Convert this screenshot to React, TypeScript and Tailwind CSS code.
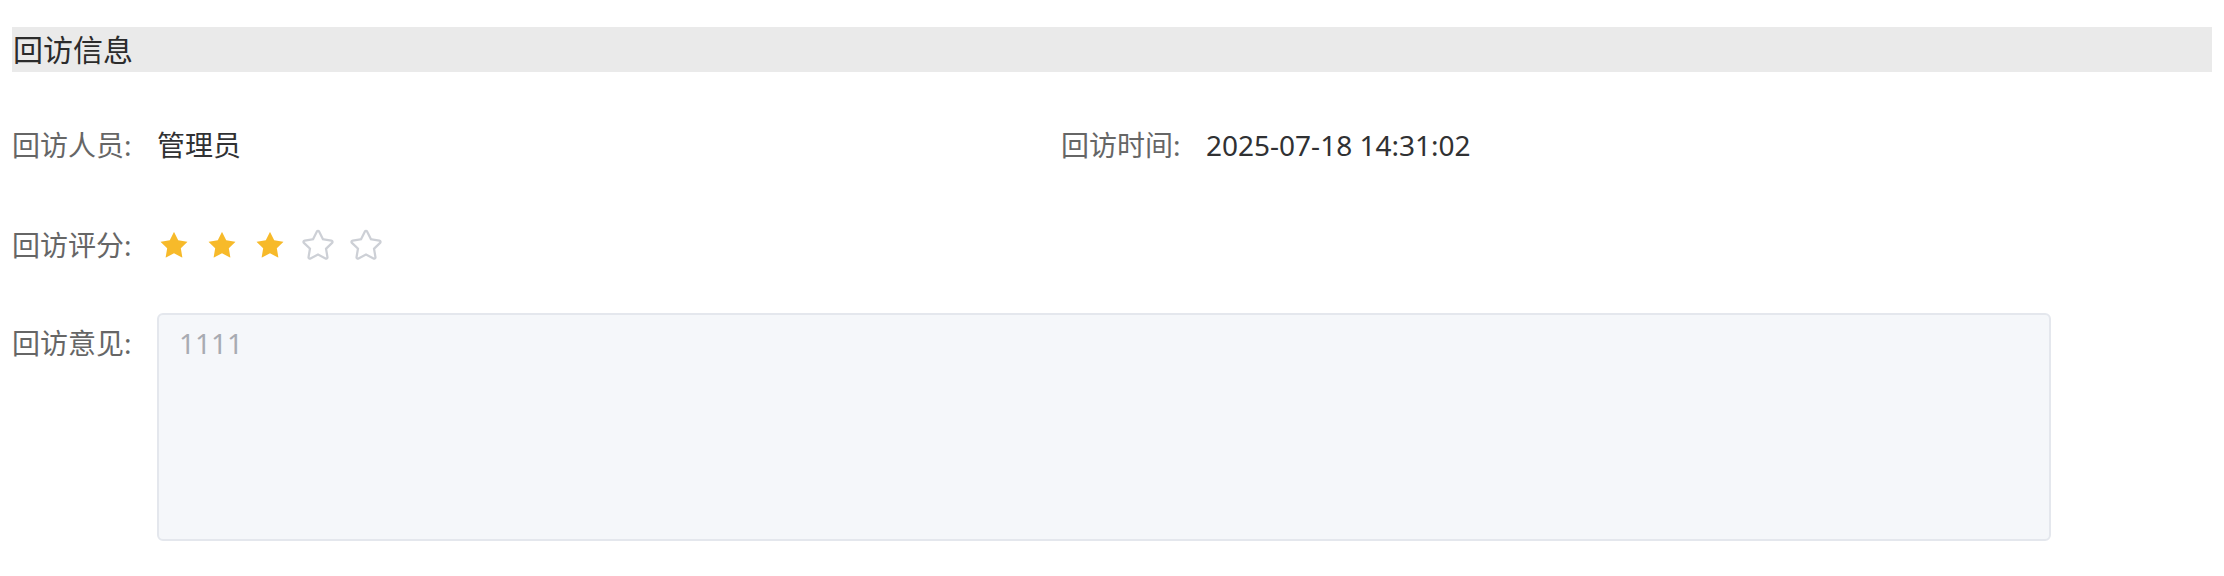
import React from "react";

const FONT = { fontFamily: '"Noto Sans", "Noto Sans CJK SC", sans-serif' };

const STAR_FILLED =
  "M283.84 867.84 512 747.776l228.16 119.936a6.4 6.4 0 0 0 9.216-6.72l-43.52-254.08 184.512-179.904a6.4 6.4 0 0 0-3.52-10.88l-255.104-37.12L517.76 147.904a6.4 6.4 0 0 0-11.52 0L392.192 379.072l-255.104 37.12a6.4 6.4 0 0 0-3.52 10.88L318.08 606.976l-43.584 254.08a6.4 6.4 0 0 0 9.28 6.72z";
const STAR_OUTLINE =
  "M512 747.84l228.16 119.936a6.4 6.4 0 0 0 9.28-6.72l-43.52-254.08 184.512-179.904a6.4 6.4 0 0 0-3.52-10.88l-255.104-37.12L517.76 147.904a6.4 6.4 0 0 0-11.52 0L392.192 379.072l-255.104 37.12a6.4 6.4 0 0 0-3.52 10.88L318.08 606.976l-43.584 254.08a6.4 6.4 0 0 0 9.28 6.72L512 747.84zM313.6 924.48a70.4 70.4 0 0 1-102.144-74.24l37.888-220.928L88.96 472.96A70.4 70.4 0 0 1 128 352.896l221.76-32.256 99.2-200.96a70.4 70.4 0 0 1 126.208 0l99.2 200.96 221.824 32.256a70.4 70.4 0 0 1 39.04 120.064L774.72 629.376l37.888 220.928a70.4 70.4 0 0 1-102.144 74.24L512 820.096l-198.4 104.32z";

function Star({ on }: { on: boolean }) {
  return (
    <svg viewBox="0 0 1024 1024" className="w-[36px] h-[36px] mr-[12px]">
      <path d={on ? STAR_FILLED : STAR_OUTLINE} fill={on ? "#f7ba2a" : "#cdd0d6"} />
    </svg>
  );
}

function Label({ children }: { children: React.ReactNode }) {
  return <div className="w-[145px] shrink-0 text-[#666666]">{children}</div>;
}

export default function App() {
  const score = 3;
  return (
    <div className="min-h-screen bg-white px-[12px] pt-[27px] text-[28px] leading-[40px]" style={FONT}>
      {/* 标题 */}
      <div className="h-[45px] bg-[#eaeaea] pl-px text-[30px] leading-[45px] text-[#2b2b2b]">回访信息</div>

      {/* 人员 / 时间 */}
      <div className="mt-[53px] grid grid-cols-[1049px_1fr]">
        <div className="flex">
          <Label>回访人员:</Label>
          <div className="text-[#303133]">管理员</div>
        </div>
        <div className="flex">
          <Label>回访时间:</Label>
          <div className="text-[#303133]">2025-07-18 14:31:02</div>
        </div>
      </div>

      {/* 评分 */}
      <div className="mt-[60px] flex">
        <Label>回访评分:</Label>
        <div className="-ml-px flex h-[40px] items-center">
          {[1, 2, 3, 4, 5].map((i) => (
            <Star key={i} on={i <= score} />
          ))}
        </div>
      </div>

      {/* 意见 */}
      <div className="mt-[48px] flex">
        <div className="w-[145px] shrink-0 pt-[10px] text-[#666666]">回访意见:</div>
        <div className="h-[228px] w-[1894px] rounded-[6px] border-2 border-[#e4e7ed] bg-[#f5f7fa] px-[20px] pt-[8px] text-[#a8abb2]">
          1111
        </div>
      </div>
    </div>
  );
}
